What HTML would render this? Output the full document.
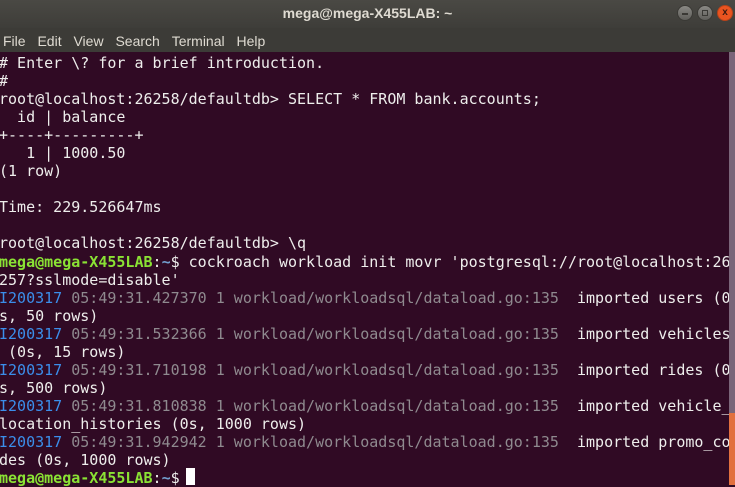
<!DOCTYPE html>
<html><head><style>
html,body{margin:0;padding:0;width:735px;height:485px;overflow:hidden;background:#300a24}
.title{position:absolute;left:0;top:0;width:735px;height:28px;background:linear-gradient(#4a4944,#3e3d39);color:#dfdbd2;font:bold 14px "Liberation Sans",sans-serif;text-align:center;line-height:27px}
.menu{position:absolute;left:0;top:28px;width:735px;height:24px;background:#3c3b37;color:#dfdbd2;font:14px "Liberation Sans",sans-serif;line-height:26px}
.menu span{margin-left:3px;margin-right:5px}
.btn{position:absolute;top:5px;width:16px;height:16px;border-radius:50%;background:linear-gradient(#8a8984,#5f5e5a);border:1px solid #3a3935;box-sizing:border-box}
.term{position:absolute;left:-1px;top:54px;font:15px "DejaVu Sans Mono",monospace;line-height:18.04px;color:#eeeeec;white-space:pre}
.g{color:#8ae234;font-weight:bold}.b{color:#3b8eea}.d{color:#8f8a8f}
.sb{position:absolute;left:729px;top:52px;width:6px;height:433px;background:#7a6579}
.th{position:absolute;left:729px;top:413px;width:6px;height:72px;background:#e2703f}
.cur{position:absolute;left:186px;top:468px;width:9px;height:17px;background:#fff}
</style></head><body>
<div class="title">mega@mega-X455LAB: ~</div>
<div class="btn" style="left:677px"><div style="position:absolute;left:4px;top:7px;width:6px;height:1.5px;background:#3a3935"></div></div>
<div class="btn" style="left:697px"><div style="position:absolute;left:4px;top:4px;width:6px;height:6px;border:1.2px solid #3a3935;box-sizing:border-box"></div></div>
<div class="btn" style="left:717px;background:#e95420;border-color:#b8431a;color:#3a1a10;font:bold 10px 'Liberation Sans',sans-serif;text-align:center;line-height:14px">x</div>
<div class="menu"><span>File</span> <span>Edit</span> <span>View</span> <span>Search</span> <span>Terminal</span> <span>Help</span></div>
<div class="term"># Enter \? for a brief introduction.
#
root@localhost:26258/defaultdb&gt; SELECT * FROM bank.accounts;
  id | balance
+----+---------+
   1 | 1000.50
(1 row)

Time: 229.526647ms

root@localhost:26258/defaultdb&gt; \q
<span class="g">mega@mega-X455LAB</span>:<span style="color:#729fcf;font-weight:bold">~</span>$ cockroach workload init movr 'postgresql://root@localhost:26
257?sslmode=disable'
<span class="b">I200317</span> <span class="d">05:49:31.427370 1 workload/workloadsql/dataload.go:135</span>  imported users (0
s, 50 rows)
<span class="b">I200317</span> <span class="d">05:49:31.532366 1 workload/workloadsql/dataload.go:135</span>  imported vehicles
 (0s, 15 rows)
<span class="b">I200317</span> <span class="d">05:49:31.710198 1 workload/workloadsql/dataload.go:135</span>  imported rides (0
s, 500 rows)
<span class="b">I200317</span> <span class="d">05:49:31.810838 1 workload/workloadsql/dataload.go:135</span>  imported vehicle_
location_histories (0s, 1000 rows)
<span class="b">I200317</span> <span class="d">05:49:31.942942 1 workload/workloadsql/dataload.go:135</span>  imported promo_co
des (0s, 1000 rows)
<span class="g">mega@mega-X455LAB</span>:<span style="color:#729fcf;font-weight:bold">~</span>$ </div>
<div class="cur"></div>
<div class="sb"></div><div class="th"></div>
</body></html>
